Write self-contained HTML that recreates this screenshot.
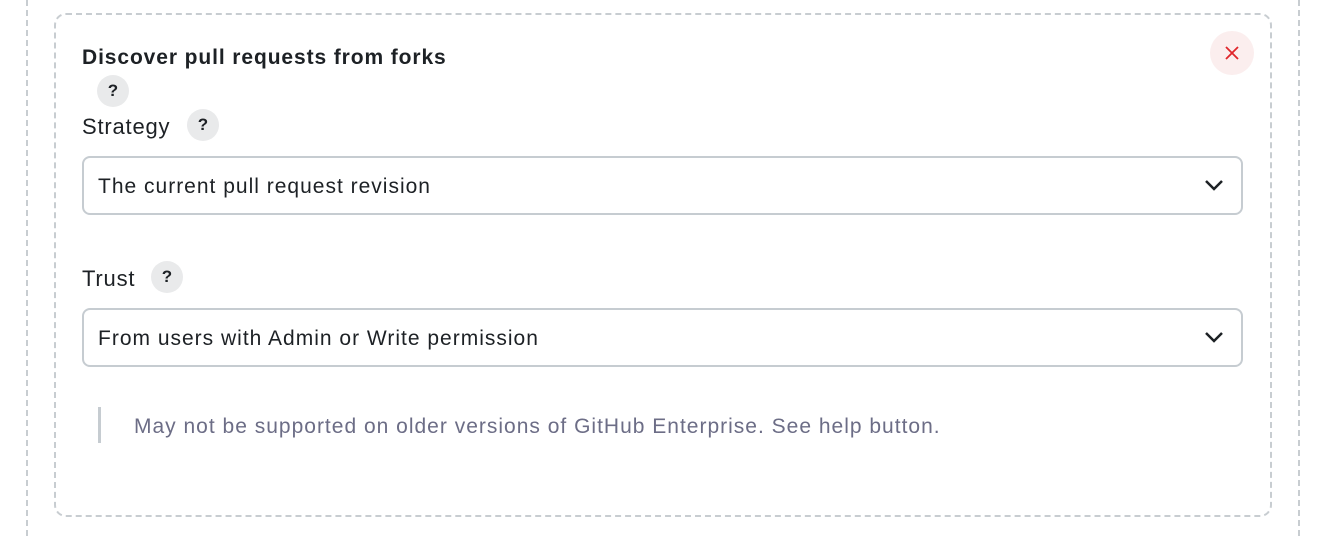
<!DOCTYPE html>
<html><head><style>
body{margin:0;width:1324px;height:536px;background:#fff;font-family:"Liberation Sans",sans-serif;color:#1d2125;position:relative;overflow:hidden}
.a{position:absolute}
.vl{position:absolute;top:0;bottom:0;width:0;border-left:2px dashed #c8cdd1}
.box{left:54px;top:13px;width:1214px;height:500px;border:2px dashed #c8cdd1;border-radius:12px}
.q{width:32px;height:32px;border-radius:50%;background:#e9eaeb;font-weight:bold;font-size:17px;text-align:center;line-height:32px;color:#1d2125}
.sel{left:82px;height:55px;border:2px solid #c6ccd1;border-radius:8px;font-size:21px;letter-spacing:1px;line-height:57px;padding-left:14px;box-sizing:content-box}
.lbl{font-size:22px;letter-spacing:0.8px}
</style></head><body>
<div class="vl" style="left:26px"></div>
<div class="vl" style="left:1298px"></div>
<div class="a box"></div>
<div class="a" style="left:82px;top:46px;font-weight:bold;font-size:21px;letter-spacing:0.9px">Discover pull requests from forks</div>
<div class="a q" style="left:97px;top:75px">?</div>
<div class="a lbl" style="left:82px;top:114px">Strategy</div>
<div class="a q" style="left:187px;top:109px">?</div>
<div class="a sel" style="top:156px;width:1143px">The current pull request revision</div>
<div class="a lbl" style="left:82px;top:266px">Trust</div>
<div class="a q" style="left:151px;top:261px">?</div>
<div class="a sel" style="top:308px;width:1143px">From users with Admin or Write permission</div>
<svg class="a" style="left:1203px;top:177px" width="22" height="16"><path d="M3 4l8 8 8-8" fill="none" stroke="#1d2125" stroke-width="2.5"/></svg>
<svg class="a" style="left:1203px;top:329px" width="22" height="16"><path d="M3 4l8 8 8-8" fill="none" stroke="#1d2125" stroke-width="2.5"/></svg>
<div class="a" style="left:98px;top:407px;width:3px;height:36px;background:#c6ccd1"></div>
<div class="a" style="left:134px;top:415px;font-size:21px;letter-spacing:1px;color:#6c6d86">May not be supported on older versions of GitHub Enterprise. See help button.</div>
<div class="a" style="left:1210px;top:31px;width:44px;height:44px;border-radius:50%;background:#fbeeee"></div>
<svg class="a" style="left:1224px;top:45px" width="16" height="16"><path d="M2 2l12 12M14 2L2 14" stroke="#e0262b" stroke-width="1.8"/></svg>
</body></html>
